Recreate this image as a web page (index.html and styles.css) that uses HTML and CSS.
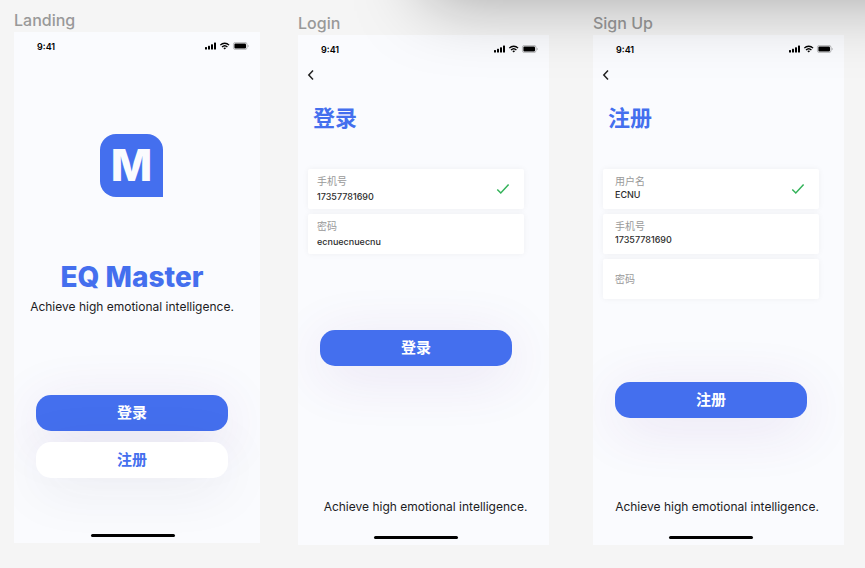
FILE: index.html
```html
<!DOCTYPE html>
<html lang="zh-CN">
<head>
<meta charset="utf-8">
<meta name="viewport" content="width=device-width, initial-scale=1">
<title>EQ Master</title>
<link rel="stylesheet" href="styles.css">
</head>
<body>
<svg class="symbols" aria-hidden="true">
  <symbol id="status" viewBox="0 0 44 8">
    <rect x="0" y="5" width="2" height="2.6" rx=".5"/>
    <rect x="3" y="3.8" width="2" height="3.8" rx=".5"/>
    <rect x="6" y="2.2" width="2" height="5.4" rx=".5"/>
    <rect x="9" y=".4" width="2" height="7.2" rx=".5"/>
    <g fill="none" stroke="currentColor" stroke-width="1.3">
      <path d="M15.3 3.1a6.2 6.2 0 0 1 8.8 0"/>
      <path d="M17 5a3.9 3.9 0 0 1 5.4 0"/>
    </g>
    <path d="M18.3 6.1a2 2 0 0 1 2.8 0l-1.4 1.5z"/>
    <rect x="28.4" y=".4" width="13.6" height="7.2" rx="2" fill="none" stroke="currentColor" stroke-opacity=".35" stroke-width=".7"/>
    <rect x="29.4" y="1.4" width="11.6" height="5.2" rx="1"/>
    <path d="M42.8 2.8v2.4c.5-.2.8-.6.8-1.2s-.3-1-.8-1.2z" opacity=".4"/>
  </symbol>
  <symbol id="back" viewBox="0 0 8 12">
    <path d="M6 1.5 1.8 6 6 10.5" fill="none" stroke="currentColor" stroke-width="1.5"/>
  </symbol>
  <symbol id="check" viewBox="0 0 14 12">
    <path d="M1.3 6.4 4.8 10 12.6 1.4" fill="none" stroke="currentColor" stroke-width="1.5"/>
  </symbol>
</svg>

<main class="board">
  <section class="frame frame-landing">
    <h2 class="frame-name">Landing</h2>
    <div class="screen">
      <div class="status"><span>9:41</span><svg class="status-icons"><use href="#status"/></svg></div>
      <div class="logo">M</div>
      <h1 class="brand">EQ Master</h1>
      <p class="tagline">Achieve high emotional intelligence.</p>
      <div class="actions">
        <button class="btn btn-primary" type="button">登录</button>
        <button class="btn btn-plain" type="button">注册</button>
      </div>
      <div class="home-bar"></div>
    </div>
  </section>

  <section class="frame frame-login">
    <h2 class="frame-name">Login</h2>
    <form class="screen">
      <div class="status"><span>9:41</span><svg class="status-icons"><use href="#status"/></svg></div>
      <button class="back" type="button" aria-label="返回"><svg class="back-icon"><use href="#back"/></svg></button>
      <h1 class="title">登录</h1>
      <div class="fields">
        <div class="field">
          <div class="field-text">
            <label for="login-phone">手机号</label>
            <input id="login-phone" type="text" value="17357781690">
          </div>
          <svg class="check"><use href="#check"/></svg>
        </div>
        <div class="field">
          <div class="field-text">
            <label for="login-password">密码</label>
            <input id="login-password" type="text" value="ecnuecnuecnu">
          </div>
        </div>
      </div>
      <button class="btn btn-primary submit" type="button">登录</button>
      <p class="tagline">Achieve high emotional intelligence.</p>
      <div class="home-bar"></div>
    </form>
  </section>

  <section class="frame frame-signup">
    <h2 class="frame-name">Sign Up</h2>
    <form class="screen">
      <div class="status"><span>9:41</span><svg class="status-icons"><use href="#status"/></svg></div>
      <button class="back" type="button" aria-label="返回"><svg class="back-icon"><use href="#back"/></svg></button>
      <h1 class="title">注册</h1>
      <div class="fields">
        <div class="field">
          <div class="field-text">
            <label for="signup-name">用户名</label>
            <input id="signup-name" type="text" value="ECNU">
          </div>
          <svg class="check"><use href="#check"/></svg>
        </div>
        <div class="field">
          <div class="field-text">
            <label for="signup-phone">手机号</label>
            <input id="signup-phone" type="text" value="17357781690">
          </div>
        </div>
        <div class="field">
          <div class="field-text field-empty">
            <label for="signup-password">密码</label>
            <input id="signup-password" type="password">
          </div>
        </div>
      </div>
      <button class="btn btn-primary submit" type="button">注册</button>
      <p class="tagline">Achieve high emotional intelligence.</p>
      <div class="home-bar"></div>
    </form>
  </section>
  <div class="window-shadow"></div>
</main>
</body>
</html>
```
FILE: styles.css
```css
* {
  box-sizing: border-box;
}

body {
  margin: 0;
  background: #f5f5f5;
  color: #1c1c1e;
  font-family: Inter, "Noto Sans CJK SC", sans-serif;
}

h1, h2, p {
  margin: 0;
}

button, input {
  font-family: inherit;
  border: 0;
  padding: 0;
  background: none;
}

button {
  cursor: pointer;
}

.symbols {
  display: none;
}

.board {
  position: relative;
  display: flex;
  min-height: 100vh;
  padding: 0 21px 0 14px;
  overflow: hidden;
}

.frame {
  display: flex;
  flex-direction: column;
  flex: 251 1 0;
  padding: 11px 0 23px;
}

.frame-landing {
  flex-grow: 246;
  padding: 8px 0 25px;
}

.frame-login {
  margin-left: 38px;
}

.frame-signup {
  margin-left: 44px;
}

.frame-name {
  color: #999;
  font-size: 16px;
  font-weight: 500;
  line-height: 24px;
}

.screen {
  display: flex;
  flex-direction: column;
  flex: 1;
  padding-bottom: 6px;
  overflow: hidden;
  background: #fafbfe;
}

.status {
  display: flex;
  align-items: center;
  justify-content: space-between;
  height: 28px;
  padding: 0 11px 0 23px;
  color: #000;
  font-size: 9px;
  font-weight: 600;
}

.status-icons {
  width: 44px;
  height: 8px;
  fill: currentColor;
}

.logo {
  align-self: center;
  width: 63px;
  height: 63px;
  margin: 74px 11px 0 0;
  border-radius: 16px 16px 0 16px;
  background: #446fee;
  color: #fafbfe;
  font-size: 44px;
  font-weight: 800;
  line-height: 63px;
  text-align: center;
}

.brand {
  margin: 62px 10px 0 0;
  color: #446fee;
  font-size: 28px;
  font-weight: 800;
  line-height: 36px;
  text-align: center;
}

.tagline {
  font-size: 12px;
  line-height: 16px;
  text-align: center;
  white-space: nowrap;
}

.frame-landing .tagline {
  margin: 4px 10px 0 0;
}

.frame-login .tagline,
.frame-signup .tagline {
  margin: auto 0 21px 4px;
}

.frame-signup .tagline {
  margin-left: 0;
  margin-right: 3px;
}

.actions {
  display: flex;
  flex-direction: column;
  gap: 11px;
  margin: 80px 32px 0 22px;
}

.btn {
  height: 36px;
  border-radius: 15px;
  font-size: 15px;
  font-weight: 700;
  line-height: 36px;
}

.btn-primary {
  background: #446fee;
  color: #fff;
  box-shadow: 0 10px 56px rgba(95, 45, 160, 0.12);
}

.btn-plain {
  background: #fff;
  color: #446fee;
  box-shadow: 0 10px 56px rgba(40, 40, 80, 0.08);
}

.submit {
  margin: 76px 37px 0 22px;
}

.frame-signup .submit {
  margin-top: 83px;
}

.home-bar {
  width: 84px;
  height: 3px;
  border-radius: 2px;
  background: #000;
}

.frame-landing .home-bar {
  margin: auto auto 0 77px;
}

.frame-login .home-bar,
.frame-signup .home-bar {
  margin-left: 76px;
}

.back {
  display: flex;
  align-self: flex-start;
  margin: 6px 0 0 9px;
  color: #222;
}

.back-icon {
  width: 8px;
  height: 12px;
}

.title {
  margin: 21px 0 0 15px;
  color: #446fee;
  font-size: 22px;
  font-weight: 700;
  line-height: 32px;
}

.fields {
  display: flex;
  flex-direction: column;
  gap: 5px;
  margin: 35px 25px 0 10px;
}

.field {
  display: flex;
  align-items: center;
  height: 40px;
  padding: 0 14px 0 9px;
  border-radius: 2px;
  background: #fff;
  box-shadow: 0 0 6px rgba(0, 0, 0, 0.05);
}

.field-text {
  display: flex;
  flex-direction: column;
  flex: 1;
  gap: 2px;
  min-width: 0;
}

.field label {
  color: #999;
  font-size: 10px;
  line-height: 13px;
}

.field input {
  width: 100%;
  height: 13px;
  color: #2d2d2d;
  font-size: 9px;
  font-weight: 500;
  line-height: 13px;
  outline: 0;
}

.frame-signup .field {
  padding-left: 12px;
}

.frame-signup .field-text {
  gap: 0;
  padding-bottom: 2px;
}

.frame-signup .field-empty {
  flex-direction: row;
  gap: 8px;
  padding-bottom: 0;
}

.field-empty label {
  flex: none;
}

.check {
  width: 14px;
  height: 12px;
  color: #34b35a;
}

.window-shadow {
  position: absolute;
  top: -100px;
  right: -80px;
  left: 425px;
  height: 100px;
  box-shadow: 0 0 70px rgba(0, 0, 0, 0.34);
  pointer-events: none;
}
```
